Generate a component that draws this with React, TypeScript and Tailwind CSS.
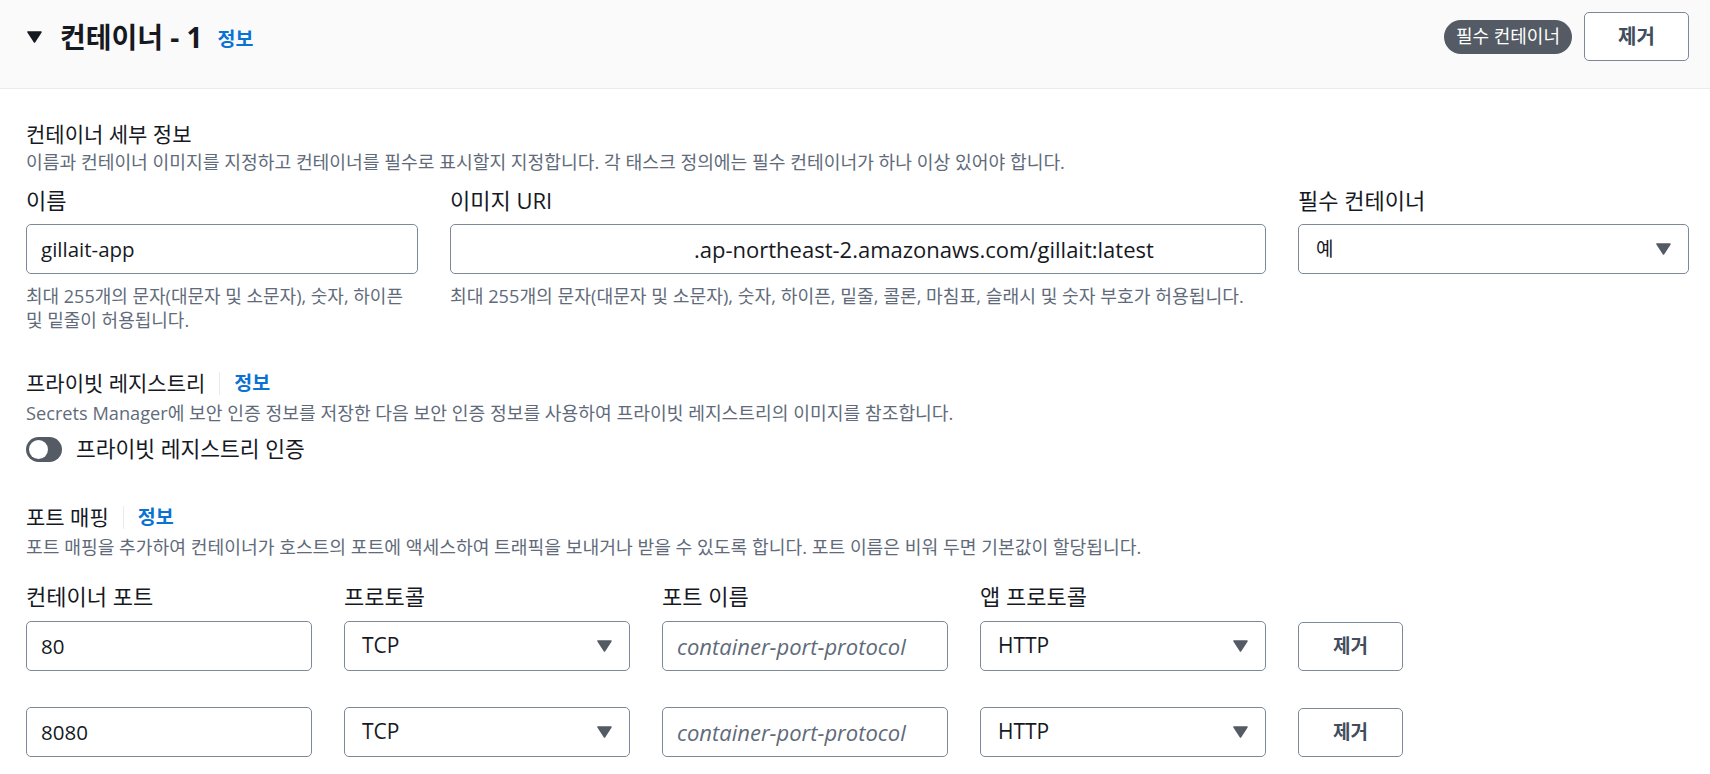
import React from "react";

const FONT = "font-['Open_Sans','Noto_Sans_CJK_KR',sans-serif]";

function Caret({ className = "" }: { className?: string }) {
  return (
    <svg width="15" height="12" viewBox="0 0 15 12" className={className}>
      <polygon points="1,1 14,1 7.5,11" fill="currentColor" stroke="currentColor" strokeWidth="1.5" strokeLinejoin="round" />
    </svg>
  );
}

function Info({ className = "" }: { className?: string }) {
  return <span className={`text-[19.5px] font-bold text-[#0972d3] leading-none ${className}`}>정보</span>;
}

function SectionHead({ title, desc, info }: { title: string; desc: string; info?: boolean }) {
  return (
    <div>
      <div className="flex items-center h-[24px]">
        <span className="text-[21px] leading-[24px] text-[#16191f]">{title}</span>
        {info && (
          <>
            <span className="mx-[14px] w-px h-[23px] bg-[#e9ebed]" />
            <Info />
          </>
        )}
      </div>
      <p className="mt-[6px] text-[18.2px] leading-[24px] text-[#5f6b7a]">{desc}</p>
    </div>
  );
}

function Label({ children }: { children: React.ReactNode }) {
  return <div className="text-[22px] leading-[24px] text-[#16191f] whitespace-nowrap">{children}</div>;
}

function TextBox({ value, placeholder, className = "" }: { value?: string; placeholder?: string; className?: string }) {
  return (
    <div className={`h-[50px] border border-[#7d8998] rounded-[5px] flex items-center px-[14px] bg-white ${className}`}>
      {value ? (
        <span className="text-[20.5px] text-[#16191f] whitespace-nowrap">{value}</span>
      ) : (
        <span className="text-[22px] italic text-[#5f6b7a] whitespace-nowrap">{placeholder}</span>
      )}
    </div>
  );
}

function Select({ value, small }: { value: string; small?: boolean }) {
  return (
    <div className="h-[50px] border border-[#7d8998] rounded-[5px] flex items-center justify-between pl-[17px] pr-[17px] bg-white">
      <span className={`${small ? "text-[19px]" : "text-[21px]"} text-[#16191f]`}>{value}</span>
      <Caret className="text-[#545b64]" />
    </div>
  );
}

function RemoveButton({ big }: { big?: boolean }) {
  return (
    <button
      className={`h-[49px] w-[105px] border border-[#7d8998] rounded-[5px] bg-white font-bold text-[#414d5c] ${
        big ? "text-[20px]" : "text-[19px]"
      }`}
    >
      제거
    </button>
  );
}

const PORTS = ["80", "8080"];

export default function App() {
  return (
    <div className={`w-[1710px] h-[774px] overflow-hidden bg-white ${FONT}`}>
      {/* Header */}
      <div className="h-[89px] bg-[#fafafa] border-b border-[#e9ebed] pt-[12px] pl-[27px] pr-[21px]">
        <div className="h-[49px] flex items-center justify-between">
          <div className="flex items-center">
            <Caret className="text-[#16191f]" />
            <h2 className="ml-[18px] text-[28px] font-bold text-[#16191f] leading-none">컨테이너 - 1</h2>
            <Info className="ml-[15px] mt-[4px]" />
          </div>
          <div className="flex items-center gap-[12px]">
            <span className="h-[34px] px-[12px] rounded-full bg-[#545b64] text-white text-[18px] flex items-center">
              필수 컨테이너
            </span>
            <RemoveButton big />
          </div>
        </div>
      </div>

      {/* Body */}
      <div className="pl-[26px] pr-[21px] pt-[33px]">
        {/* Container details */}
        <div>
          <span className="block text-[21px] leading-[24px] text-[#16191f]">컨테이너 세부 정보</span>
          <p className="mt-[4px] text-[18.2px] leading-[24px] text-[#5f6b7a]">
            이름과 컨테이너 이미지를 지정하고 컨테이너를 필수로 표시할지 지정합니다. 각 태스크 정의에는 필수 컨테이너가 하나 이상 있어야 합니다.
          </p>
        </div>
        <div className="mt-[14px] grid grid-cols-[392px_816px_391px] gap-x-8">
          <div>
            <Label>이름</Label>
            <TextBox value="gillait-app" className="mt-[12px]" />
            <p className="mt-[10px] text-[18px] leading-[24px] text-[#5f6b7a] whitespace-nowrap">
              최대 255개의 문자(대문자 및 소문자), 숫자, 하이픈
              <br />및 밑줄이 허용됩니다.
            </p>
          </div>
          <div>
            <Label>이미지 URI</Label>
            <div className="mt-[12px] h-[50px] border border-[#7d8998] rounded-[5px] flex items-center pl-[243px] bg-white">
              <span className="text-[22px] text-[#16191f] whitespace-nowrap">.ap-northeast-2.amazonaws.com/gillait:latest</span>
            </div>
            <p className="mt-[10px] text-[18.2px] leading-[24px] text-[#5f6b7a]">
              최대 255개의 문자(대문자 및 소문자), 숫자, 하이픈, 밑줄, 콜론, 마침표, 슬래시 및 숫자 부호가 허용됩니다.
            </p>
          </div>
          <div>
            <Label>필수 컨테이너</Label>
            <div className="mt-[12px]">
              <Select value="예" small />
            </div>
          </div>
        </div>

        {/* Private registry */}
        <div className="mt-[39px]">
          <SectionHead
            title="프라이빗 레지스트리"
            info
            desc="Secrets Manager에 보안 인증 정보를 저장한 다음 보안 인증 정보를 사용하여 프라이빗 레지스트리의 이미지를 참조합니다."
          />
          <div className="mt-[12px] flex items-center h-[25px]">
            <span className="w-[36px] h-[25px] rounded-full bg-[#545b64] flex items-center">
              <span className="ml-[3px] w-[19px] h-[19px] rounded-full bg-white" />
            </span>
            <span className="ml-[14px] text-[21.5px] text-[#16191f]">프라이빗 레지스트리 인증</span>
          </div>
        </div>

        {/* Port mappings */}
        <div className="mt-[43px]">
          <SectionHead
            title="포트 매핑"
            info
            desc="포트 매핑을 추가하여 컨테이너가 호스트의 포트에 액세스하여 트래픽을 보내거나 받을 수 있도록 합니다. 포트 이름은 비워 두면 기본값이 할당됩니다."
          />
          <div className="mt-[25px] grid grid-cols-[286px_286px_286px_286px_105px] gap-x-8">
            <Label>컨테이너 포트</Label>
            <Label>프로토콜</Label>
            <Label>포트 이름</Label>
            <Label>앱 프로토콜</Label>
            <div />
          </div>
          {PORTS.map((port, i) => (
            <div
              key={port}
              className={`grid grid-cols-[286px_286px_286px_286px_105px] gap-x-8 items-center ${i === 0 ? "mt-[13px]" : "mt-[36px]"}`}
            >
              <TextBox value={port} />
              <Select value="TCP" />
              <TextBox placeholder="container-port-protocol" />
              <Select value="HTTP" />
              <RemoveButton />
            </div>
          ))}
        </div>
      </div>
    </div>
  );
}
